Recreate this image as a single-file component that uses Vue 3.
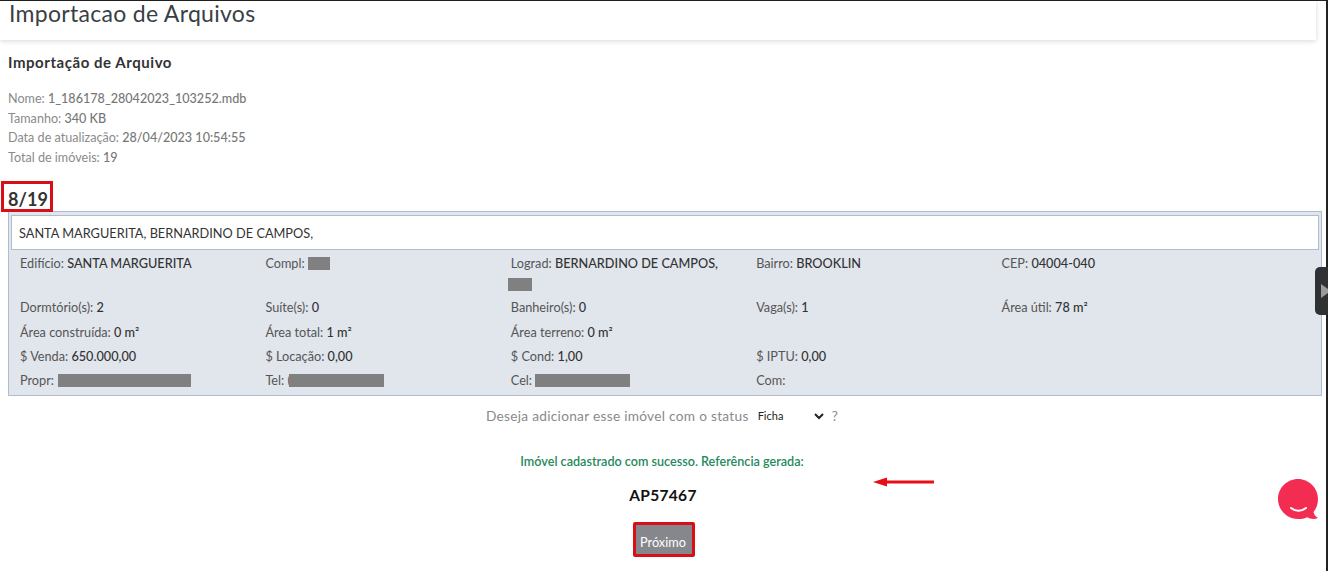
<script setup>
const rows = [
  { cls: 'tall', cells: [
    [{ l: 'Edifício: ', v: 'SANTA MARGUERITA' }],
    [{ l: 'Compl: ', r: 22 }],
    [{ l: 'Lograd: ', v: 'BERNARDINO DE CAMPOS,', r2: 24 }],
    [{ l: 'Bairro: ', v: 'BROOKLIN' }],
    [{ l: 'CEP: ', v: '04004-040' }],
  ]},
  { cls: '', cells: [
    [{ l: 'Dormtório(s): ', v: '2' }],
    [{ l: 'Suíte(s): ', v: '0' }],
    [{ l: 'Banheiro(s): ', v: '0' }],
    [{ l: 'Vaga(s): ', v: '1' }],
    [{ l: 'Área útil: ', v: '78 m²' }],
  ]},
  { cls: '', cells: [
    [{ l: 'Área construída: ', v: '0 m²' }],
    [{ l: 'Área total: ', v: '1 m²' }],
    [{ l: 'Área terreno: ', v: '0 m²' }],
    [{ l: '' }],
    [{ l: '' }],
  ]},
  { cls: '', cells: [
    [{ l: '$ Venda: ', v: '650.000,00' }],
    [{ l: '$ Locação: ', v: '0,00' }],
    [{ l: '$ Cond: ', v: '1,00' }],
    [{ l: '$ IPTU: ', v: '0,00' }],
    [{ l: '' }],
  ]},
  { cls: '', cells: [
    [{ l: 'Propr: ', r: 133, wide: true }],
    [{ l: 'Tel: (', r: 95, tight: true }],
    [{ l: 'Cel: ', r: 95 }],
    [{ l: 'Com:' }],
    [{ l: '' }],
  ]},
]
</script>

<template>
  <div class="page">
    <header class="head"><h1>Importacao de Arquivos</h1></header>

    <section class="meta">
      <h2>Importação de Arquivo</h2>
      <p>Nome: <b>1_186178_28042023_103252.mdb</b></p>
      <p>Tamanho: <b>340 KB</b></p>
      <p>Data de atualização: <b>28/04/2023 10:54:55</b></p>
      <p>Total de imóveis: <b>19</b></p>
    </section>

    <div class="counter"><span>8/19</span></div>

    <section class="box">
      <div class="title">SANTA MARGUERITA, BERNARDINO DE CAMPOS,</div>
      <div v-for="(row, i) in rows" :key="i" class="row" :class="row.cls">
        <div v-for="(cell, j) in row.cells" :key="j" class="cell">
          <template v-for="(c, k) in cell" :key="k">
            {{ c.l }}<b v-if="c.v">{{ c.v }}</b>
            <i v-if="c.r" class="redact" :class="{ tight: c.tight, wide: c.wide }" :style="{ width: c.r + 'px' }"></i>
            <i v-if="c.r2" class="redact block" :style="{ width: c.r2 + 'px' }"></i>
          </template>
        </div>
      </div>
    </section>

    <div class="status">
      <span>Deseja adicionar esse imóvel com o status</span>
      <select class="sel"><option>Ficha</option></select>
      <span>?</span>
    </div>

    <p class="ok">Imóvel cadastrado com sucesso. Referência gerada:</p>
    <p class="ref">AP57467</p>
    <div class="next"><button>Próximo</button></div>

    <svg class="arrow" width="62" height="10" viewBox="0 0 62 10">
      <path d="M0 5 L14 .5 L14 3.500 L61 3.500 L61 6.500 L14 6.500 L14 9.500 Z" fill="#e60f15" />
    </svg>

    <div class="side"><svg width="10" height="14" viewBox="0 0 10 14"><path d="M0 0 L10 7 L0 14 Z" fill="#9b9b9b" /></svg></div>

    <svg class="chat" width="44" height="44" viewBox="0 0 44 44">
      <path d="M21 1 C32 1 41 10 41 21 C41 26 39.500 30.500 36.500 34 C37 36.500 38.500 38.500 41 40 C37 41.500 33 41 30.500 39.200 C27.500 40.500 24.500 41 21 41 C10 41 1 32 1 21 C1 10 10 1 21 1 Z" fill="#f32c52" />
      <path d="M14 30 C18 33.500 25 33.500 29 30" fill="none" stroke="#fff" stroke-width="2" stroke-linecap="round" />
    </svg>
  </div>
</template>

<style>
html, body { margin: 0; background: #fff; overflow: hidden; }
</style>

<style scoped>
.page {
  position: relative;
  width: 1328px;
  height: 571px;
  box-sizing: border-box;
  border-top: 1px solid #222;
  border-right: 2px solid #222;
  font-family: Lato, "Open Sans", sans-serif;
  color: #333;
  font-size: 12.700px;
}
.head {
  width: 1316px;
  height: 39px;
  background: #fff;
  box-shadow: 0 1px 5px rgba(0, 0, 0, .16);
  padding-left: 9px;
  box-sizing: border-box;
}
h1 {
  margin: 0;
  font-size: 23px;
  font-weight: 400;
  letter-spacing: .3px;
  line-height: 24px;
  color: #3a3f45;
}
.meta { padding: 12px 0 0 8px; }
h2 {
  margin: 0 0 17px;
  font-size: 15px;
  font-weight: 700;
  line-height: 20px;
  letter-spacing: .55px;
  color: #333;
}
.meta p {
  margin: 0;
  line-height: 19.700px;
  color: #8a8a8a;
  font-size: 12.600px;
}
.meta b { font-weight: 500; color: #777; }
.counter {
  margin-top: 13px;
  height: 30px;
  display: flex;
  padding-left: 1px;
}
.counter span {
  box-sizing: border-box;
  width: 52px;
  height: 31px;
  border: 3px solid #d80f16;
  padding: 4px 0 0 4px;
  font-size: 18px;
  line-height: 23px;
  font-weight: 700;
  letter-spacing: .1px;
  position: relative;
  z-index: 1;
}
.box {
  box-sizing: border-box;
  margin-left: 8px;
  width: 1314px;
  height: 185px;
  background: #e1e5ec;
  border: 1px solid #b0bdd0;
  padding: 3px 2px 0;
}
.title {
  box-sizing: border-box;
  height: 35px;
  background: #fff;
  border: 1px solid #b0bdd0;
  padding: 1px 0 0 7px;
  line-height: 33px;
  font-size: 12.750px;
  color: #333;
}
.row {
  display: flex;
  height: 24.400px;
  line-height: 20px;
  padding: 2px 0 0 9px;
  box-sizing: border-box;
  color: #555;
  font-size: 12.700px;
}
.row.tall { height: 45.300px; padding-top: 3px; }
.cell { width: 245.400px; flex: none; }
.cell b { font-weight: 500; color: #333; }
.redact {
  display: inline-block;
  height: 13px;
  background: #808080;
  vertical-align: -2px;
}
.redact.wide { margin-left: 1px; }
.redact.tight { margin-left: -2px; }
.redact.block { display: block; margin: 5px 0 0 -3px; }
.status {
  display: flex;
  justify-content: center;
  align-items: center;
  gap: 5px;
  margin-top: 9px;
  height: 22px;
  padding-right: 2px;
  color: #8a8a8a;
  font-size: 13.700px;
  letter-spacing: .28px;
}
.sel {
  width: 73px;
  height: 20px;
  border: 0;
  background: #fff;
  font-family: Lato, sans-serif;
  font-size: 11px;
  color: #222;
  padding: 0;
}
.ok {
  margin: 25px 0 0;
  text-align: center;
  color: #1f8a5b;
  font-size: 12.600px;
  font-weight: 600;
  line-height: 20px;
  padding-right: 2px;
}
.ref {
  margin: 13px 0 0;
  text-align: center;
  font-size: 15.500px;
  font-weight: 700;
  color: #111;
  line-height: 20px;
  letter-spacing: .3px;
}
.next { display: flex; justify-content: center; margin-top: 17px; padding-left: 2px; }
.next button {
  box-sizing: border-box;
  width: 62px;
  height: 35px;
  background: #85878c;
  border: 3px solid #d80f16;
  border-radius: 2px;
  padding: 6px 2px 0 0;
  color: #fff;
  font-family: Lato, sans-serif;
  font-size: 12.700px;
}
.arrow { position: absolute; left: 873px; top: 476px; }
.side {
  position: absolute;
  left: 1315px;
  top: 266px;
  width: 13px;
  height: 48px;
  background: #2f3133;
  border-radius: 5px 0 0 5px;
  display: flex;
  align-items: center;
  padding-left: 6px;
  box-sizing: border-box;
  overflow: hidden;
}
.side svg { flex: none; }
.chat { position: absolute; left: 1277px; top: 477px; }
</style>
